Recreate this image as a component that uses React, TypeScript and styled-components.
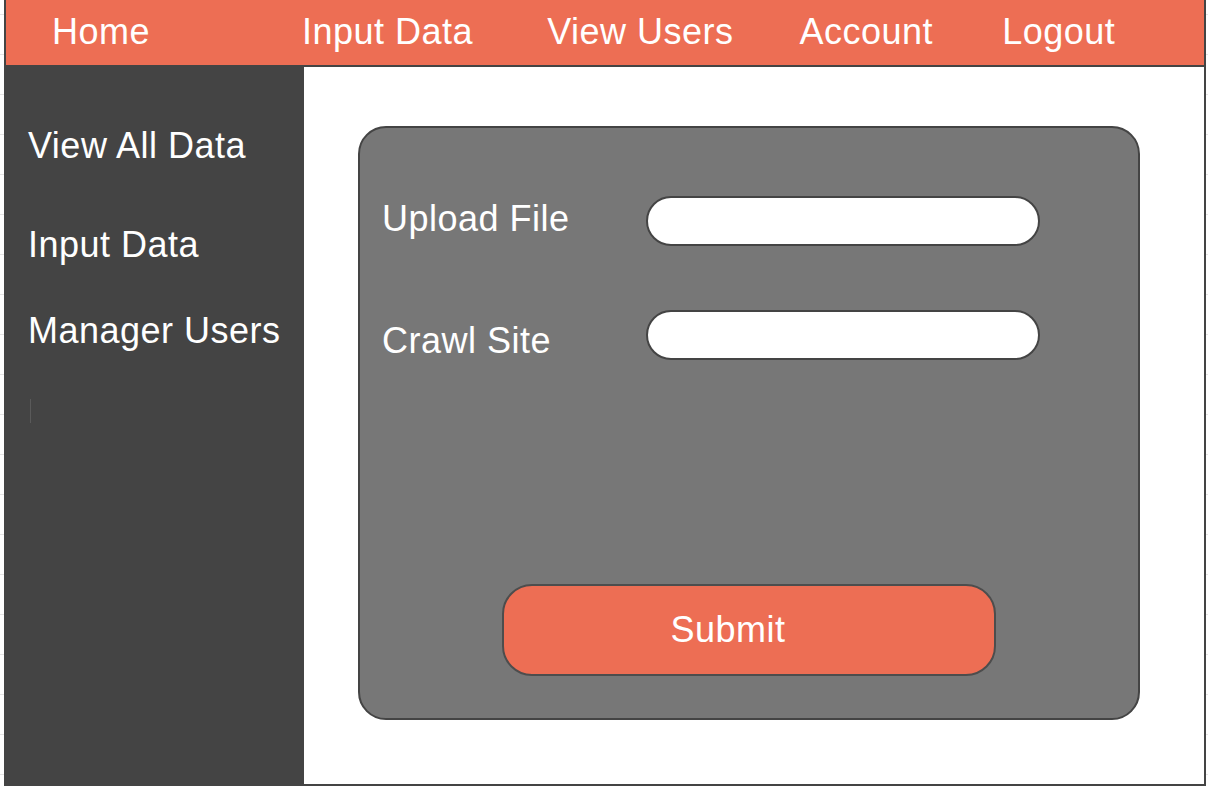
import React from "react";
import styled, { createGlobalStyle } from "styled-components";

const GlobalStyle = createGlobalStyle`
  html, body {
    margin: 0;
    padding: 0;
    width: 1208px;
    height: 786px;
    overflow: hidden;
    font-family: "Liberation Sans", Arial, sans-serif;
    background-color: #ffffff;
    background-image: repeating-linear-gradient(
      to bottom,
      transparent 0px,
      transparent 14px,
      #e4e4e4 14px,
      #e4e4e4 15px,
      transparent 15px,
      transparent 40px
    );
  }
  * { box-sizing: border-box; }
`;

const ORANGE = "#ed6e54";

const Frame = styled.div`
  margin-left: 4px;
  width: 1202px;
  height: 786px;
  border-left: 2px solid #444444;
  border-right: 2px solid #444444;
  border-bottom: 2px solid #444444;
  display: flex;
  flex-direction: column;
  background: #ffffff;
`;

const TopNav = styled.nav`
  height: 67px;
  flex: 0 0 67px;
  background: ${ORANGE};
  border-bottom: 2px solid #444444;
  display: flex;
  align-items: flex-start;
  padding-top: 11px;
`;

const NavItem = styled.a<{ $ml: number }>`
  margin-left: ${(p) => p.$ml}px;
  color: #ffffff;
  font-size: 36px;
  line-height: 41px;
  letter-spacing: 0.5px;
  text-decoration: none;
  white-space: nowrap;
`;

const Body = styled.div`
  flex: 1;
  display: flex;
  min-height: 0;
`;

const Sidebar = styled.aside`
  width: 298px;
  flex: 0 0 298px;
  background: #444444;
  display: flex;
  flex-direction: column;
  padding-left: 22px;
`;

const SideItem = styled.a<{ $mt: number }>`
  margin-top: ${(p) => p.$mt}px;
  color: #ffffff;
  font-size: 36px;
  line-height: 41px;
  letter-spacing: 0.5px;
  text-decoration: none;
  white-space: nowrap;
`;

const Caret = styled.span`
  display: block;
  width: 1px;
  height: 24px;
  margin-top: 48px;
  margin-left: 2px;
  background: #5a5a5a;
`;

const Content = styled.main`
  flex: 1;
  background: #ffffff;
  padding-left: 54px;
  padding-top: 59px;
`;

const Panel = styled.section`
  width: 782px;
  height: 594px;
  background: #777777;
  border: 2px solid #444444;
  border-radius: 28px;
  display: flex;
  flex-direction: column;
  padding: 68px 0 42px 22px;
`;

const FieldRow = styled.div<{ $mt: number }>`
  display: flex;
  align-items: flex-start;
  margin-top: ${(p) => p.$mt}px;
`;

const FieldLabel = styled.label<{ $offset: number }>`
  width: 264px;
  flex: 0 0 264px;
  margin-top: ${(p) => p.$offset}px;
  color: #ffffff;
  font-size: 36px;
  line-height: 41px;
  letter-spacing: 0.5px;
  white-space: nowrap;
`;

const TextBox = styled.input`
  width: 394px;
  height: 50px;
  border: 2px solid #444444;
  border-radius: 25px;
  background: #ffffff;
  outline: none;
  padding: 0 20px;
  font-family: inherit;
  font-size: 20px;
`;

const SubmitButton = styled.button`
  margin-top: auto;
  margin-left: 120px;
  width: 494px;
  height: 92px;
  background: ${ORANGE};
  border: 2px solid #4d4d4d;
  border-radius: 30px;
  color: #ffffff;
  font-family: "Liberation Sans", Arial, sans-serif;
  font-size: 36px;
  line-height: 41px;
  letter-spacing: 0.5px;
  display: flex;
  align-items: center;
  justify-content: center;
  padding: 0 42px 1px 0;
  cursor: pointer;
`;

const navItems: { label: string; ml: number }[] = [
  { label: "Home", ml: 46 },
  { label: "Input Data", ml: 152 },
  { label: "View Users", ml: 74 },
  { label: "Account", ml: 66 },
  { label: "Logout", ml: 69 },
];

export default function App() {
  return (
    <>
      <GlobalStyle />
      <Frame>
        <TopNav>
          {navItems.map((n) => (
            <NavItem key={n.label} $ml={n.ml}>
              {n.label}
            </NavItem>
          ))}
        </TopNav>
        <Body>
          <Sidebar>
            <SideItem $mt={58}>View All Data</SideItem>
            <SideItem $mt={58}>Input Data</SideItem>
            <SideItem $mt={45}>Manager Users</SideItem>
            <Caret />
          </Sidebar>
          <Content>
            <Panel>
              <FieldRow $mt={0}>
                <FieldLabel $offset={2}>Upload File</FieldLabel>
                <TextBox type="text" aria-label="Upload File" />
              </FieldRow>
              <FieldRow $mt={64}>
                <FieldLabel $offset={10}>Crawl Site</FieldLabel>
                <TextBox type="text" aria-label="Crawl Site" />
              </FieldRow>
              <SubmitButton type="button">Submit</SubmitButton>
            </Panel>
          </Content>
        </Body>
      </Frame>
    </>
  );
}
